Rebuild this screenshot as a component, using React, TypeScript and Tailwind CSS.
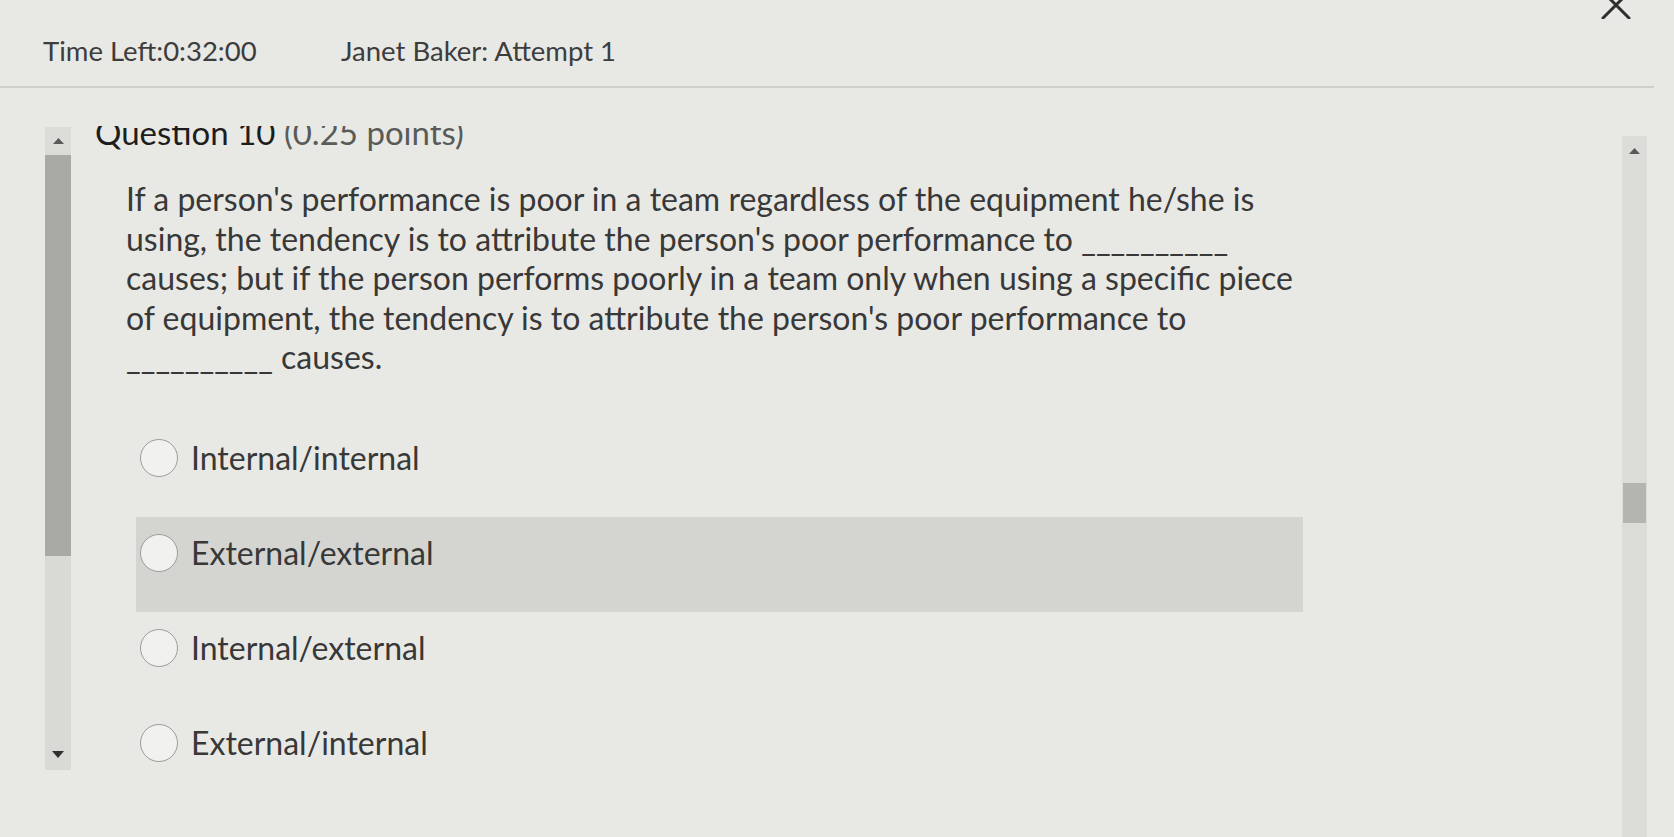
import React from "react";

const options = [
  "Internal/internal",
  "External/external",
  "Internal/external",
  "External/internal",
];

function Radio() {
  return (
    <span className="block w-[38px] h-[38px] shrink-0 rounded-full border-[1.5px] border-[#9c9d9a] bg-[#f1f2ef]" />
  );
}

function UpArrow() {
  return (
    <svg width="11" height="6" viewBox="0 0 11 6">
      <path d="M0 6 L5.5 0 L11 6 Z" fill="#5a5a5a" />
    </svg>
  );
}

function DownArrow() {
  return (
    <svg width="12" height="7" viewBox="0 0 12 7">
      <path d="M0 0 L6 7 L12 0 Z" fill="#2f2f2f" />
    </svg>
  );
}

export default function App() {
  return (
    <div className="relative w-[1674px] h-[837px] overflow-hidden bg-[#e8e9e5] font-['Lato',sans-serif] text-[#3a3a3a]">
      {/* top bar */}
      <header className="h-[88px] w-[1654px] border-b-2 border-[#cfd0cc] flex items-start pt-[35px] pl-[43px] text-[27.5px] leading-[32px] text-[#3d3d3d]">
        <span className="w-[298px]">Time Left:0:32:00</span>
        <span>Janet Baker: Attempt 1</span>
      </header>

      {/* close button */}
      <button className="absolute left-[1601px] top-[-9px] w-[30px] h-[28px]">
        <svg width="30" height="28" viewBox="0 0 30 28">
          <path d="M2 1 L28 27 M28 1 L2 27" stroke="#2f2f2f" strokeWidth="3" strokeLinecap="round" />
        </svg>
      </button>

      <div className="flex h-[749px]">
        {/* left scrollbar */}
        <div className="ml-[45px] mt-[39px] w-[26px] h-[643px] flex flex-col shrink-0">
          <div className="h-[28px] bg-[#dcddd9] flex items-center justify-center">
            <UpArrow />
          </div>
          <div className="h-[401px] bg-[#a9aaa6]" />
          <div className="flex-1 bg-[#d9dad6] flex items-end justify-center pb-[12px]">
            <DownArrow />
          </div>
        </div>

        {/* question area */}
        <div className="ml-[24px] mt-[38px] flex-1 overflow-hidden">
          <h2 className="mt-[-14px] text-[33px] leading-[40px] whitespace-nowrap">
            <span className="text-[#1d1d1d]">Question 10</span>
            <span className="text-[#5a5b58]"> (0.25 points)</span>
          </h2>

          <div className="ml-[31px] mt-[27px] text-[32px] leading-[39.5px] text-[#383838] whitespace-nowrap">
            <p>If a person's performance is poor in a team regardless of the equipment he/she is</p>
            <p>using, the tendency is to attribute the person's poor performance to __________</p>
            <p>causes; but if the person performs poorly in a team only when using a specific piece</p>
            <p>of equipment, the tendency is to attribute the person's poor performance to</p>
            <p>__________ causes.</p>
          </div>

          <ul className="ml-[41px] mt-[45px] w-[1167px]">
            {options.map((o, i) => (
              <li
                key={o}
                className={
                  i === 1
                    ? "h-[95px] pt-[17px] pl-[4px] bg-[#d4d5d1]"
                    : "h-[95px] pt-[17px] pl-[4px]"
                }
              >
                <label className="flex items-center gap-[13px] h-[38px] text-[32px] text-[#383838]">
                  <Radio />
                  <span>{o}</span>
                </label>
              </li>
            ))}
          </ul>
        </div>

        {/* right scrollbar */}
        <div className="mr-[27px] mt-[48px] w-[25px] flex flex-col shrink-0 bg-[#dcddd8]">
          <div className="h-[30px] flex items-center justify-center">
            <UpArrow />
          </div>
          <div className="h-[317px]" />
          <div className="mx-[1px] h-[40px] bg-[#b4b5b1]" />
        </div>
      </div>
    </div>
  );
}
